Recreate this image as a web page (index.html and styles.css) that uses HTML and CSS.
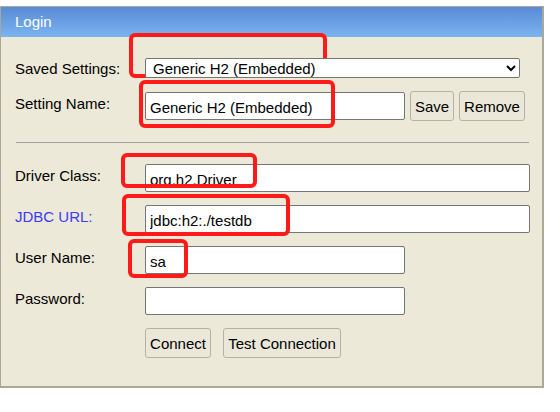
FILE: index.html
```html
<!DOCTYPE html>
<html>
<head>
<meta charset="utf-8">
<link rel="stylesheet" href="styles.css">
</head>
<body>
<div class="panel">
  <div class="header">Login</div>
  <div class="content">
    <div class="form top">
      <label class="lbl first">Saved Settings:</label>
      <select class="sel"><option>Generic H2 (Embedded)</option></select>
      <label class="lbl">Setting Name:</label>
      <div class="inline">
        <input class="inp short" type="text" value="Generic H2 (Embedded)">
        <button class="btn save">Save</button>
        <button class="btn remove">Remove</button>
      </div>
    </div>
    <div class="rule"></div>
    <div class="form bottom">
      <label class="lbl">Driver Class:</label>
      <input class="inp long" type="text" value="org.h2.Driver">
      <label class="lbl link">JDBC URL:</label>
      <input class="inp long" type="text" value="jdbc:h2:./testdb">
      <label class="lbl">User Name:</label>
      <input class="inp short" type="text" value="sa">
      <label class="lbl">Password:</label>
      <input class="inp short" type="password" value="">
      <span></span>
      <div class="inline actions">
        <button class="btn connect">Connect</button>
        <button class="btn test">Test Connection</button>
      </div>
    </div>
  </div>
</div>
<div class="mark m1"></div>
<div class="mark m2"></div>
<div class="mark m3"></div>
<div class="mark m4"></div>
<div class="mark m5"></div>
</body>
</html>
```

FILE: styles.css
```css
html, body {
  margin: 0;
  padding: 0;
  background: #ffffff;
}
body {
  position: relative;
  width: 560px;
  height: 412px;
  padding-top: 6px;
  box-sizing: border-box;
  font-family: "Liberation Sans", Arial, sans-serif;
  font-size: 15px;
  color: #000;
}
.panel {
  width: 544px;
  box-sizing: border-box;
  border-top: 1px solid #aca899;
  border-left: 1px solid #aca899;
  border-right: 2px solid #aca899;
  border-bottom: 2px solid #aca899;
  background: #ece9d8;
}
.header {
  height: 30px;
  line-height: 30px;
  padding-left: 14px;
  color: #ffffff;
  font-size: 15px;
  background: linear-gradient(#5a8bd5, #7ab4f1);
}
.content {
  padding: 21px 13px 28px 14px;
}
.form {
  display: grid;
  grid-template-columns: 130px auto;
  row-gap: 13px;
  align-items: center;
  justify-items: start;
}
.lbl {
  padding-bottom: 6px;
  white-space: nowrap;
}
.lbl.first {
  padding-bottom: 0;
}
.lbl.link {
  color: #3a3aff;
}
.sel {
  position: relative;
  z-index: 2;
  width: 375px;
  height: 20px;
  box-sizing: border-box;
  font-family: "Liberation Sans", Arial, sans-serif;
  font-size: 15px;
  color: #000;
  background: #fff;
  border: 1px solid #767676;
  border-radius: 2px;
  padding: 0 0 0 3px;
}
.inline {
  display: flex;
  align-items: center;
  gap: 5px;
}
.inp {
  height: 28px;
  box-sizing: border-box;
  border: 1px solid #767676;
  border-radius: 2px;
  background: #fff;
  font-family: "Liberation Sans", Arial, sans-serif;
  font-size: 15px;
  color: #000;
  padding: 3px 4px 0 4px;
  margin: 0;
  outline: none;
}
.inp.short { width: 260px; }
.inp.long { width: 385px; }
.btn {
  height: 30px;
  box-sizing: border-box;
  border: 1px solid #b4b2a8;
  border-radius: 3px;
  background: #ebe8da;
  font-family: "Liberation Sans", Arial, sans-serif;
  font-size: 15px;
  color: #000;
  padding: 0 4px;
  margin: 0;
}
.save { width: 44px; }
.remove { width: 66px; }
.actions { gap: 12px; }
.connect { width: 66px; }
.test { width: 118px; }
.rule {
  height: 1px;
  width: 513px;
  background: #a0a0a0;
  margin: 21px 0 21px 1px;
}
.mark {
  position: absolute;
  z-index: 1;
  box-sizing: border-box;
  border: 4px solid #ff1a1a;
  border-radius: 6px;
}
.m1 { left: 129px; top: 33px; width: 198px; height: 45px; }
.m2 { left: 139px; top: 80px; width: 196px; height: 48px; }
.m3 { left: 121px; top: 153px; width: 136px; height: 35px; }
.m4 { left: 122px; top: 194px; width: 168px; height: 42px; }
.m5 { left: 128px; top: 239px; width: 60px; height: 39px; }
```
